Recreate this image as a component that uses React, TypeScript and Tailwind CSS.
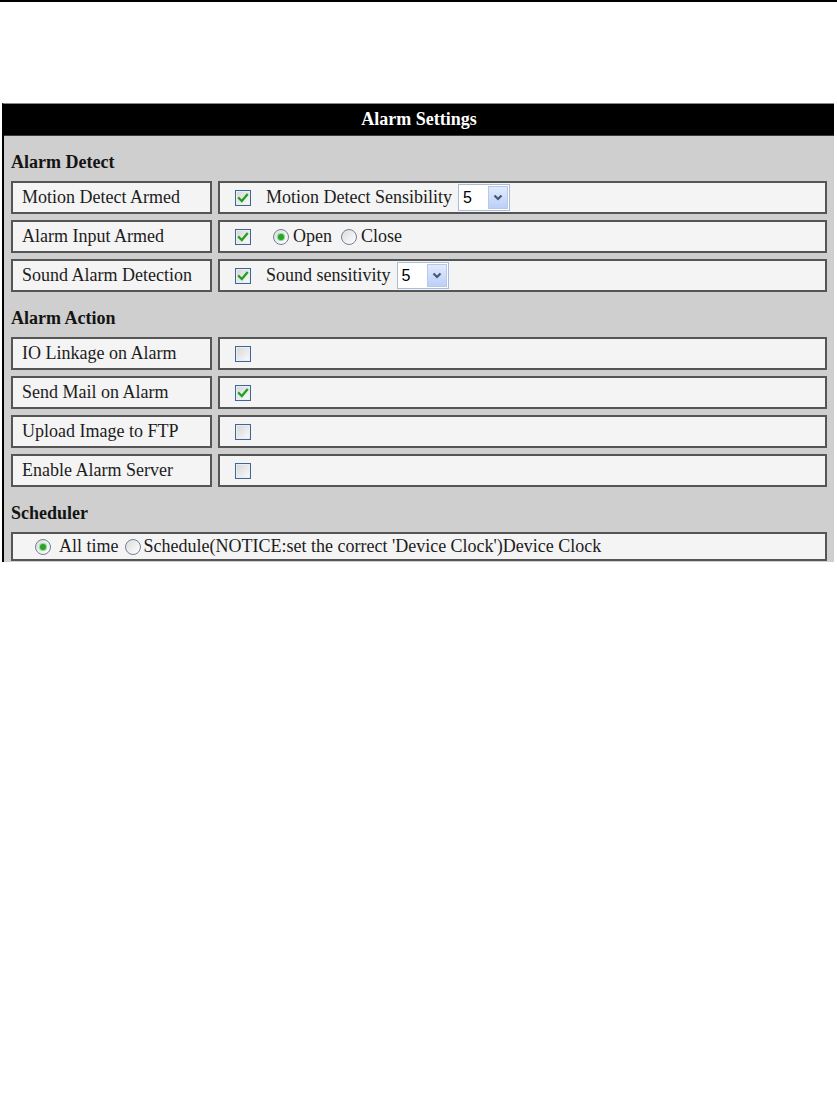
import React from 'react';

const Check = ({ checked }: { checked?: boolean }) => (
  <span className="relative flex w-[16px] h-[16px] shrink-0 border border-[#3f6791] bg-gradient-to-br from-[#d6d6d6] to-[#fbfbfb] shadow-[inset_0_0_0_1px_#e8eef5]">
    {checked && (
      <svg className="absolute inset-0" width="14" height="14" viewBox="0 0 14 14">
        <path d="M3 7.2 L5.8 10 L11 3.8" fill="none" stroke="#21a121" strokeWidth="2.3" strokeLinecap="square" />
      </svg>
    )}
  </span>
);

const Radio = ({ on, className = '' }: { on?: boolean; className?: string }) => (
  <span className={`flex items-center justify-center w-[16px] h-[16px] shrink-0 rounded-full border border-[#6f819a] bg-gradient-to-br from-[#dcdcdc] to-[#ffffff] ${className}`}>
    {on && <span className="w-[6px] h-[6px] rounded-full bg-[#26a526] shadow-[0_0_0_1px_#8fd88f]" />}
  </span>
);

const Select = ({ value }: { value: string }) => (
  <div className="ml-[6px] flex w-[52px] h-[27px] border border-[#a9bcd9] bg-white shrink-0">
    <span className="flex-1 pl-[4px] text-[16px] leading-[25px] text-black font-['Liberation_Sans',Arial,sans-serif]">{value}</span>
    <span className="w-[20px] m-[1px] flex items-center justify-center border border-[#b7c8ea] bg-gradient-to-b from-[#e2ebfd] to-[#bccff6]">
      <svg width="10" height="7" viewBox="0 0 10 7">
        <path d="M1.5 1.5 L5 5 L8.5 1.5" fill="none" stroke="#44587f" strokeWidth="2.2" />
      </svg>
    </span>
  </div>
);

const Row = ({ label, children }: { label: string; children: React.ReactNode }) => (
  <div className="flex gap-[6px] h-[33px]">
    <div className="w-[201px] h-full flex items-center pl-[9px] border-2 border-[#555555] bg-[#f4f4f4] text-[#1c1c1c]">
      {label}
    </div>
    <div className="flex-1 h-full flex items-center pl-[15px] border-2 border-[#555555] bg-[#f4f4f4] text-[#1c1c1c]">
      {children}
    </div>
  </div>
);

const Heading = ({ text }: { text: string }) => (
  <div className="h-[45px] pt-[14px] leading-[24px] font-bold text-[18px] text-[#141414]">{text}</div>
);

export default function App() {
  return (
    <div className="min-h-[1104px] bg-white font-['Liberation_Serif','Times_New_Roman',serif] text-[18px]">
      <div className="h-[2px] bg-black" />
      <div className="pt-[101px] ml-[2px] mr-[3px]">
        <div className="border-l-2 border-black border-t border-t-[#8a8a8a] bg-[#cfcfcf]">
          <div className="h-[32px] bg-black border-b border-b-[#3a3a3a] flex items-center justify-center text-white font-bold text-[18px]">
            Alarm Settings
          </div>
          <div className="px-[7px] pb-[1px]">
            <Heading text="Alarm Detect" />
            <div className="flex flex-col gap-[6px]">
              <Row label="Motion Detect Armed">
                <Check checked />
                <span className="ml-[15px]">Motion Detect Sensibility</span>
                <Select value="5" />
              </Row>
              <Row label="Alarm Input Armed">
                <Check checked />
                <Radio on className="ml-[22px]" />
                <span className="ml-[4px]">Open</span>
                <Radio className="ml-[9px]" />
                <span className="ml-[4px]">Close</span>
              </Row>
              <Row label="Sound Alarm Detection">
                <Check checked />
                <span className="ml-[15px]">Sound sensitivity</span>
                <Select value="5" />
              </Row>
            </div>
            <Heading text="Alarm Action" />
            <div className="flex flex-col gap-[6px]">
              <Row label="IO Linkage on Alarm"><Check /></Row>
              <Row label="Send Mail on Alarm"><Check checked /></Row>
              <Row label="Upload Image to FTP"><Check /></Row>
              <Row label="Enable Alarm Server"><Check /></Row>
            </div>
            <Heading text="Scheduler" />
            <div className="h-[29px] flex items-center pl-[22px] border-2 border-[#555555] bg-[#f4f4f4] text-[#1c1c1c]">
              <Radio on />
              <span className="ml-[8px]">All time</span>
              <Radio className="ml-[6px]" />
              <span className="ml-[3px]">Schedule(NOTICE:set the correct 'Device Clock')Device Clock</span>
            </div>
          </div>
        </div>
      </div>
    </div>
  );
}
